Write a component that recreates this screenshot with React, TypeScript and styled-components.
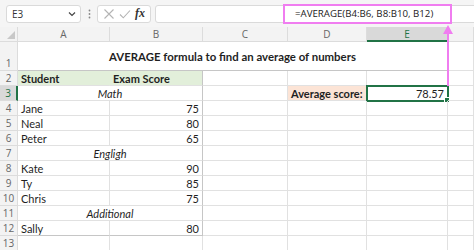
import React from "react";
import styled, { createGlobalStyle, css } from "styled-components";

const GlobalStyle = createGlobalStyle`
  html, body {
    margin: 0;
    padding: 0;
    background: #ffffff;
    overflow: hidden;
  }
`;

const GREEN = "#217346";
const PINK = "#f07df0";
const GRID = "#e1e1e1";
const EDGE = "#c6c6c6";

const Page = styled.div`
  position: relative;
  width: 474px;
  height: 250px;
  overflow: hidden;
  font-family: Lato, "Liberation Sans", sans-serif;
`;

const Toolbar = styled.div`
  display: flex;
  align-items: center;
  height: 27px;
  padding-left: 6px;
  background: #f5f5f5;
  box-sizing: border-box;
`;

const NameBox = styled.div`
  display: flex;
  align-items: center;
  justify-content: space-between;
  width: 75px;
  height: 18px;
  box-sizing: border-box;
  padding: 0 4px 0 5px;
  background: #fff;
  border: 1px solid #dadada;
  border-radius: 3px;
  font-family: "Open Sans", "Noto Sans", sans-serif;
  font-size: 10px;
  color: #333;
`;

const Dots = styled.div`
  width: 16px;
  display: flex;
  justify-content: center;
`;

const FuncBox = styled.div`
  display: flex;
  align-items: center;
  justify-content: space-around;
  width: 54px;
  height: 18px;
  box-sizing: border-box;
  padding: 0 3px;
  background: #fff;
  border: 1px solid #dadada;
  border-radius: 3px;
`;

const Fx = styled.span`
  font-family: "Liberation Serif", "DejaVu Serif", serif;
  font-style: italic;
  font-weight: bold;
  font-size: 12px;
  color: #333;
`;

const FormulaBar = styled.div`
  flex: 1;
  display: flex;
  align-items: center;
  height: 18px;
  margin-left: 4px;
  margin-right: -4px;
  padding-left: 127px;
  box-sizing: border-box;
  background: #fff;
  border: 1px solid #dadada;
  border-radius: 3px;
`;

const Highlight = styled.div`
  display: flex;
  align-items: center;
  width: 169px;
  height: 20px;
  box-sizing: border-box;
  padding-left: 10px;
  border: 2px solid ${PINK};
  font-family: "Open Sans", "Noto Sans", sans-serif;
  font-size: 9.7px;
  color: #222;
  white-space: nowrap;
`;

const Sheet = styled.div`
  display: grid;
  grid-template-columns: 18px 92px 93px 85px 79px 81px 1fr;
  grid-template-rows: 15px 29px repeat(12, 15px);
`;

const Header = styled.div<{ $active?: boolean; $side?: boolean }>`
  display: flex;
  align-items: center;
  justify-content: center;
  box-sizing: border-box;
  background: #f3f3f3;
  border-right: 1px solid #dcdcdc;
  border-bottom: 1px solid #dcdcdc;
  font-family: "Open Sans", "Noto Sans", sans-serif;
  font-size: 10px;
  color: #666;
  ${(p) =>
    p.$side &&
    css`
      align-items: flex-end;
      padding-bottom: 0px;
    `}
  ${(p) =>
    p.$active &&
    css`
      background: #d9d9d9;
      color: ${GREEN};
      ${p.$side
        ? css`border-right: 2px solid ${GREEN};`
        : css`border-bottom: 2px solid ${GREEN};`}
    `}
`;

const Corner = styled(Header)`
  align-items: flex-end;
  justify-content: flex-end;
  padding: 0 2px 2px 0;
`;

type CellProps = {
  $span?: number;
  $bold?: boolean;
  $italic?: boolean;
  $align?: "left" | "center" | "right";
  $bg?: string;
  $edgeRight?: boolean;
  $edgeBottom?: boolean;
  $noRight?: boolean;
  $selected?: boolean;
  $big?: boolean;
};

const Cell = styled.div<CellProps>`
  position: relative;
  grid-column: span ${(p) => p.$span ?? 1};
  display: flex;
  align-items: center;
  justify-content: ${(p) =>
    p.$align === "right" ? "flex-end" : p.$align === "center" ? "center" : "flex-start"};
  padding: 1px 3px 0 3px;
  box-sizing: border-box;
  overflow: visible;
  white-space: nowrap;
  background: ${(p) => p.$bg ?? "transparent"};
  border-right: 1px solid ${(p) => (p.$edgeRight ? EDGE : p.$noRight ? "transparent" : GRID)};
  border-bottom: 1px solid ${(p) => (p.$edgeBottom ? EDGE : GRID)};
  font-size: ${(p) => (p.$big ? "11.4px" : "11px")};
  font-weight: ${(p) => (p.$bold ? 700 : 400)};
  font-style: ${(p) => (p.$italic ? "italic" : "normal")};
  color: #1f1f1f;
  ${(p) =>
    p.$selected &&
    css`
      outline: 2px solid ${GREEN};
      outline-offset: -1px;
    `}
`;

const FillHandle = styled.span`
  position: absolute;
  right: -3px;
  bottom: -3px;
  width: 4px;
  height: 4px;
  background: ${GREEN};
  border: 1px solid #fff;
`;

const Arrow = styled.svg`
  position: absolute;
  left: 442px;
  top: 24px;
`;

const Cross = () => (
  <svg width="12" height="12" viewBox="0 0 12 12">
    <path d="M1.5 1.5 L10.5 10.5 M10.5 1.5 L1.5 10.5" stroke="#b4b4b4" strokeWidth="1.1" fill="none" />
  </svg>
);

const Check = () => (
  <svg width="12" height="12" viewBox="0 0 12 12">
    <path d="M1 6.5 L4.3 9.8 L11 2.5" stroke="#b4b4b4" strokeWidth="1.1" fill="none" />
  </svg>
);

const Chevron = () => (
  <svg width="8" height="6" viewBox="0 0 8 6">
    <path d="M1 1.5 L4 4.5 L7 1.5" stroke="#444" strokeWidth="1.2" fill="none" />
  </svg>
);

const VDots = () => (
  <svg width="3" height="10" viewBox="0 0 3 10">
    <circle cx="1.5" cy="1.5" r="0.9" fill="#888" />
    <circle cx="1.5" cy="5" r="0.9" fill="#888" />
    <circle cx="1.5" cy="8.5" r="0.9" fill="#888" />
  </svg>
);

type Row =
  | { kind: "title"; text: string }
  | { kind: "head" }
  | { kind: "group"; text: string }
  | { kind: "data"; name: string; score: number }
  | { kind: "empty" };

const rows: Row[] = [
  { kind: "title", text: "AVERAGE formula to find an average of numbers" },
  { kind: "head" },
  { kind: "group", text: "Math" },
  { kind: "data", name: "Jane", score: 75 },
  { kind: "data", name: "Neal", score: 80 },
  { kind: "data", name: "Peter", score: 65 },
  { kind: "group", text: "Engligh" },
  { kind: "data", name: "Kate", score: 90 },
  { kind: "data", name: "Ty", score: 85 },
  { kind: "data", name: "Chris", score: 75 },
  { kind: "group", text: "Additional" },
  { kind: "data", name: "Sally", score: 80 },
  { kind: "empty" },
];

const columns = ["A", "B", "C", "D", "E"];

const App = (): JSX.Element => {
  const renderRow = (row: Row, i: number) => {
    const n = i + 1;
    const last = n === 12;
    const tableCells = (() => {
      switch (row.kind) {
        case "title":
          return (
            <Cell $span={5} $bold $big $align="center" $edgeBottom>
              {row.text}
            </Cell>
          );
        case "head":
          return (
            <>
              <Cell $bold $bg="#e2efda" $noRight>Student</Cell>
              <Cell $bold $bg="#e2efda" $edgeRight>Exam Score</Cell>
            </>
          );
        case "group":
          return (
            <Cell $span={2} $italic $align="center" $edgeRight>
              {row.text}
            </Cell>
          );
        case "data":
          return (
            <>
              <Cell $edgeBottom={last}>{row.name}</Cell>
              <Cell $align="right" $edgeRight $edgeBottom={last}>
                {row.score}
              </Cell>
            </>
          );
        default:
          return (
            <>
              <Cell />
              <Cell />
            </>
          );
      }
    })();

    const rest =
      row.kind === "title" ? (
        <Cell />
      ) : n === 3 ? (
        <>
          <Cell />
          <Cell $bold $bg="#fce4d6">Average score:</Cell>
          <Cell $align="right" $selected>
            78.57
            <FillHandle />
          </Cell>
          <Cell />
        </>
      ) : (
        <>
          <Cell />
          <Cell />
          <Cell />
          <Cell />
        </>
      );

    return (
      <React.Fragment key={n}>
        <Header $side $active={n === 3}>{n}</Header>
        {tableCells}
        {rest}
      </React.Fragment>
    );
  };

  return (
    <Page>
      <GlobalStyle />
      <Toolbar>
        <NameBox>
          <span>E3</span>
          <Chevron />
        </NameBox>
        <Dots>
          <VDots />
        </Dots>
        <FuncBox>
          <Cross />
          <Check />
          <Fx>fx</Fx>
        </FuncBox>
        <FormulaBar>
          <Highlight>=AVERAGE(B4:B6, B8:B10, B12)</Highlight>
        </FormulaBar>
      </Toolbar>
      <Sheet>
        <Corner>
          <svg width="8" height="8" viewBox="0 0 8 8">
            <path d="M8 0 L8 8 L0 8 Z" fill="#c8c8c8" />
          </svg>
        </Corner>
        {columns.map((c) => (
          <Header key={c} $active={c === "E"}>
            {c}
          </Header>
        ))}
        <Header />
        {rows.map(renderRow)}
      </Sheet>
      <Arrow width="12" height="62" viewBox="0 0 12 62">
        <path d="M6 1 L11 10 L1 10 Z" fill={PINK} />
        <rect x="5" y="8" width="2" height="54" fill={PINK} />
      </Arrow>
    </Page>
  );
};

export default App;
